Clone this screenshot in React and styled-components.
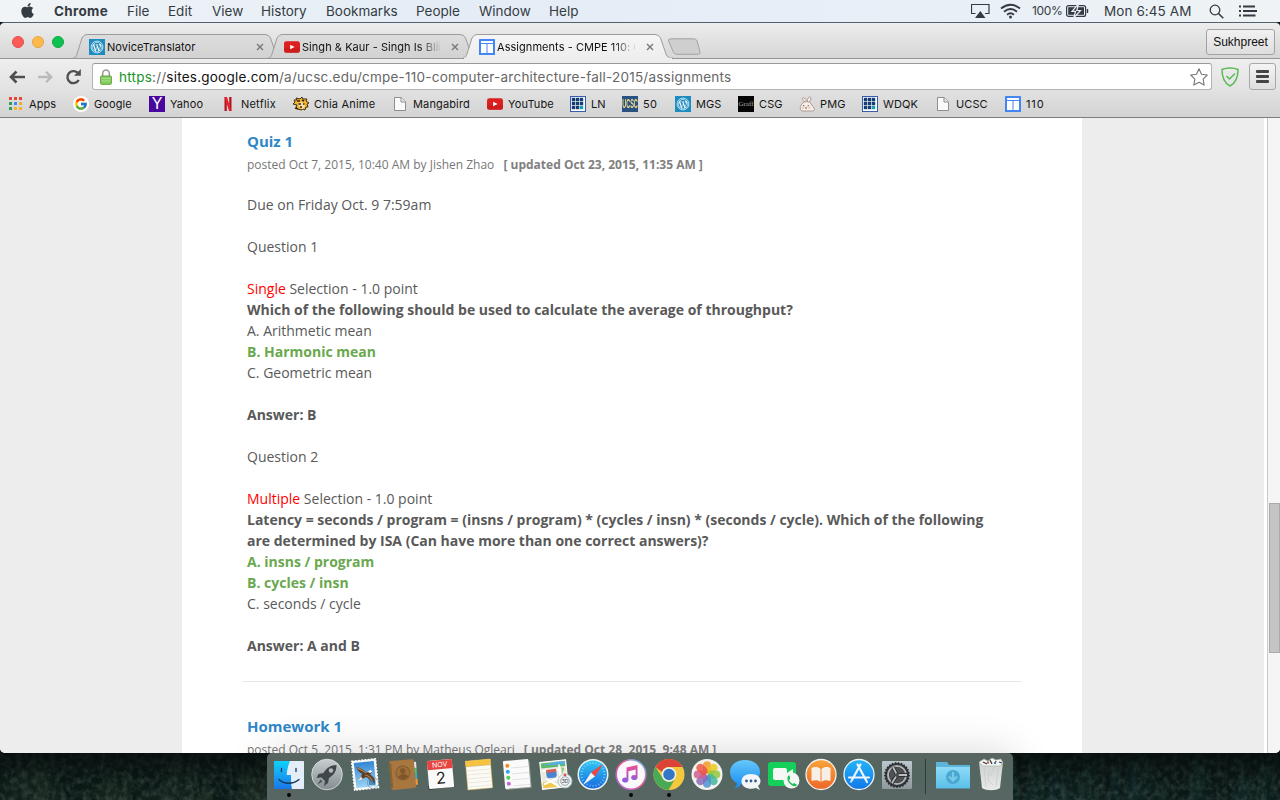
import React from "react";
import styled, { createGlobalStyle, css } from "styled-components";
import { FaApple, FaWordpressSimple } from "react-icons/fa";
import { FcGoogle } from "react-icons/fc";

const GlobalStyle = createGlobalStyle`
  * { box-sizing: border-box; }
  body { margin: 0; overflow: hidden; background: #0c1917; }
`;

const ui = `Inter, "Liberation Sans", sans-serif`;

const Desktop = styled.div`
  position: relative;
  display: flex;
  flex-direction: column;
  width: 1280px;
  height: 800px;
  overflow: hidden;
  background: #0c1917;
  font-family: ${ui};
`;

/* ---------- menu bar ---------- */

const MenuBar = styled.header`
  display: flex;
  align-items: center;
  height: 22px;
  flex: none;
  padding: 0 23px 0 20px;
  background: linear-gradient(90deg, #f0f4f6, #e4edf6 35%, #e7eff7 70%, #eff3f5);
  color: #353b42;
  font-size: 13.5px;
  line-height: 22px;
  white-space: nowrap;
`;

const AppleSlot = styled.span`
  display: flex;
  width: 34px;
  svg { width: 15px; height: 17px; margin-top: -2px; }
`;

const MenuItem = styled.span`
  width: ${(p) => p.$w}px;
  flex: none;
  font-weight: ${(p) => (p.$bold ? 700 : 400)};
  letter-spacing: ${(p) => (p.$bold ? 0.3 : 0)}px;
`;

const MenuStatus = styled.div`
  display: flex;
  align-items: center;
  margin-left: auto;
  svg { display: block; flex: none; }
`;

const WifiIcon = styled.svg`margin-left: 10px;`;
const ListIcon = styled.svg`margin-left: 15px;`;

const BatteryText = styled.span`
  width: 34px;
  margin-left: 11px;
  font-size: 12px;
  letter-spacing: -0.35px;
`;

const Clock = styled.span`
  width: 88px;
  margin: 0 17px 0 15px;
  letter-spacing: 0.08px;
`;

/* ---------- browser window ---------- */

const Window = styled.main`
  display: flex;
  flex-direction: column;
  width: 1280px;
  height: 731px;
  flex: none;
  border-top: 1px solid #52616e;
  border-radius: 5px;
  overflow: hidden;
  background: #e4e4e4;
`;

const TabStrip = styled.div`
  display: flex;
  align-items: flex-start;
  height: 36px;
  flex: none;
  padding: 0 5px 0 12px;
  border-bottom: 1px solid #969696;
  background: linear-gradient(#ededed, #d6d6d6);
`;

const Lights = styled.div`
  display: flex;
  gap: 8px;
  width: 61px;
  padding-top: 13px;
`;

const Light = styled.i`
  width: 12px;
  height: 12px;
  border-radius: 50%;
  background: ${(p) => p.$c};
  border: 1px solid ${(p) => p.$b};
`;

const TabBox = styled.div`
  position: relative;
  z-index: ${(p) => (p.$active ? 3 : 1)};
  display: flex;
  align-items: center;
  width: 210px;
  height: 26px;
  margin: 10px -15px 0 0;
  padding: 2px 19px 0 16px;
  font-size: 11px;
  color: #111;
`;

const TabShape = styled.svg`
  position: absolute;
  inset: 0;
  z-index: -1;
`;

const TabTitle = styled.span`
  width: 138px;
  margin-left: 2px;
  overflow: hidden;
  white-space: nowrap;
  letter-spacing: 0.05px;
  ${(p) =>
    p.$fade &&
    css`
      mask-image: linear-gradient(90deg, #000 84%, transparent 102%);
    `}
`;

const TabClose = styled.svg`
  flex: none;
  margin-left: auto;
`;

const NewTab = styled.svg`
  margin: 15px 0 0 9px;
`;

const ProfileButton = styled.button`
  width: 69px;
  height: 26px;
  margin: 6px 0 0 auto;
  padding: 0;
  border: 1px solid #a2a2a2;
  border-radius: 3px;
  background: linear-gradient(#f1f1f1, #dedede);
  font: 12px "Liberation Sans", Arial, sans-serif;
  color: #111;
`;

const Toolbar = styled.div`
  display: flex;
  align-items: center;
  height: 32px;
  flex: none;
  padding: 3px 4px 0 8px;
  background: linear-gradient(#eeeeee, #e2e2e2);
`;

const NavIcon = styled.svg`
  flex: none;
  margin-right: ${(p) => p.$mr}px;
`;

const Omnibox = styled.div`
  display: flex;
  align-items: center;
  width: 1120px;
  height: 27px;
  padding: 0 3px 0 7px;
  border: 1px solid #b3b3b3;
  border-top-color: #999;
  border-radius: 3px;
  background: #fff;
`;

const Url = styled.span`
  margin-left: 7px;
  font-size: 13.5px;
  color: #666;
  letter-spacing: 0.23px;
  white-space: nowrap;
`;
const Scheme = styled.span`color: #149527;`;
const Host = styled.span`color: #111;`;

const StarIcon = styled.svg`margin-left: auto;`;
const ShieldIcon = styled.svg`margin-left: 9px;`;

const MenuButton = styled.button`
  display: flex;
  flex-direction: column;
  gap: 2px;
  align-items: center;
  justify-content: center;
  width: 27px;
  height: 27px;
  padding: 0;
  margin-left: auto;
  border: 1px solid #a8a8a8;
  border-radius: 3px;
  background: linear-gradient(#f4f4f4, #dedede);
`;
const MenuLine = styled.i`
  width: 13px;
  height: 3px;
  border-radius: 1px;
  background: #444;
`;

const BookmarkBar = styled.nav`
  display: flex;
  align-items: center;
  height: 27px;
  flex: none;
  padding-left: 8px;
  border-bottom: 1px solid #7d7d7d;
  background: linear-gradient(#e1e1e1, #d3d3d3);
  font-size: 11px;
  color: #151515;
`;

const Bookmark = styled.a`
  display: flex;
  align-items: center;
  gap: 5px;
  flex: none;
  width: ${(p) => p.$w}px;
  letter-spacing: ${(p) => p.$ls}px;
  white-space: nowrap;
`;

const Tile = styled.i`
  display: flex;
  align-items: center;
  justify-content: center;
  flex: none;
  width: 16px;
  height: 16px;
  overflow: hidden;
  background: ${(p) => p.$bg};
  color: ${(p) => p.$fg || "#fff"};
  border-radius: ${(p) => p.$r || 0};
  font: ${(p) => p.$font || `700 14px ${ui}`};
  letter-spacing: 0;
`;

const Squeeze = styled.span`
  transform: scaleX(${(p) => p.$x});
`;

/* ---------- page ---------- */

const Viewport = styled.div`
  display: flex;
  height: 635px;
  background: #ededed;
  padding-left: 182px;
`;

const Sheet = styled.article`
  width: 900px;
  height: 635px;
  padding: 13px 60px 0;
  overflow: hidden;
  background: #fff;
  font-family: "Open Sans", "Noto Sans", sans-serif;
  color: #595959;
`;

const Post = styled.section`
  padding: 0 5px 25px;
  margin-bottom: 34px;
  border-bottom: 1px solid #e8e8e8;
`;

const PostTitle = styled.h2`
  margin: 0;
  font-size: 15px;
  line-height: 20px;
  font-weight: 700;
  color: #2f87c8;
`;

const Meta = styled.div`
  margin-top: 4px;
  font-size: 12px;
  line-height: 20px;
  color: #777;
  b { margin-left: 6px; color: #808080; }
`;

const Body = styled.div`
  padding-top: 19px;
  font-size: 14px;
  line-height: 21px;
`;

const Line = styled.div`
  white-space: nowrap;
  margin-top: ${(p) => (p.$gap ? 21 : 0)}px;
  font-weight: ${(p) => (p.$bold || p.$correct ? 700 : 400)};
  color: ${(p) => (p.$correct ? "#6aa84f" : "inherit")};
`;

const Red = styled.span`color: #f00;`;

const ScrollTrack = styled.div`
  width: 16px;
  margin-left: auto;
  padding: 385px 1px 0 1px;
  border-left: 3px solid #fff;
  background: linear-gradient(90deg, #c9c9c9 1px, #f5f5f5 1px);
`;
const ScrollThumb = styled.div`
  width: 11px;
  height: 150px;
  margin-left: 1px;
  border: 1px solid #aaa;
  background: #c4c4c4;
`;

/* ---------- dock ---------- */

const Forest = styled.svg`
  position: absolute;
  left: 0;
  bottom: 0;
`;

const Dock = styled.footer`
  position: absolute;
  left: 267px;
  bottom: 0;
  display: flex;
  width: 746px;
  height: 47px;
  padding-left: 3px;
  border-radius: 5px 5px 0 0;
  background: linear-gradient(#59645f, #526760 45%, #596563);
  box-shadow: 0 0 40px rgba(0, 0, 0, 0.16);
`;

const DockItem = styled.div`
  display: flex;
  flex-direction: column;
  align-items: center;
  width: 38px;
  padding-top: 4px;
  svg { display: block; overflow: visible; }
`;

const RunningDot = styled.i`
  width: 4px;
  height: 4px;
  margin-top: 2px;
  border-radius: 50%;
  background: #050505;
`;

const DockDivider = styled.i`
  width: 1px;
  height: 35px;
  margin: 6px 8px 0 9px;
  background: #303b38;
`;

/* ---------- small icons ---------- */

const Wordpress = () => (
  <Tile $bg="#1e8cbe" $fg="#fff">
    <svg width="14" height="14" viewBox="0 0 14 14">
      <circle cx="7" cy="7" r="5.9" fill="none" stroke="#d4eaf4" strokeWidth=".9" />
      <g transform="translate(2 2)"><FaWordpressSimple size={10} /></g>
    </svg>
  </Tile>
);

const YouTube = () => (
  <svg width="16" height="16" viewBox="0 0 16 16">
    <rect y="2.3" width="16" height="11.4" rx="2.3" fill="#dc2020" />
    <path d="M0 9h16v2.5a2.3 2.3 0 0 1-2.3 2.2H2.3A2.3 2.3 0 0 1 0 11.500z" fill="#bf1515" opacity=".5" />
    <path d="M6.200 5.700v4.600L10.600 8z" fill="#fff" />
  </svg>
);

const SitesIcon = () => (
  <svg width="16" height="16" viewBox="0 0 16 16">
    <rect width="16" height="16" rx=".6" fill="#4285f4" />
    <path d="M2 2h12v2H2zM2 5h5.500v9H2zM8.500 5H14v9H8.500z" fill="#fff" />
  </svg>
);

const PageIcon = () => (
  <svg width="16" height="16" viewBox="0 0 16 16">
    <path d="M2.500 1.500h6.700l4.300 4.300v8.700h-11z" fill="#fafafa" stroke="#8f8f8f" />
    <path d="M9 1.500v4.500h4.500" fill="#e9e9e9" stroke="#8f8f8f" />
  </svg>
);

const GridIcon = () => (
  <svg width="16" height="16" viewBox="0 0 16 16">
    <rect width="16" height="16" fill="#365cab" />
    <rect x="1" y="1" width="14" height="14" fill="#fff" />
    {[0, 1, 2].map((r) =>
      [0, 1, 2].map((c) => (
        <rect key={`${r}${c}`} x={2 + c * 4} y={2 + r * 4} width="3" height="3" fill={r === 2 && c === 2 ? "#17a2a8" : "#173d73"} stroke={r === 2 && c === 2 ? "#17a2a8" : "#173d73"} strokeWidth=".4" />
      ))
    )}
  </svg>
);

const appColors = ["#e94335", "#e94335", "#e94335", "#2f9e57", "#4285f4", "#f7a928", "#2f9e57", "#f7b328", "#f7b328"];
const AppsIcon = () => (
  <svg width="16" height="16" viewBox="0 0 16 16">
    {appColors.map((c, i) => (
      <rect key={i} x={1 + (i % 3) * 5} y={1 + Math.floor(i / 3) * 5} width="3" height="3" fill={c} />
    ))}
  </svg>
);

const NetflixIcon = () => (
  <svg width="16" height="16" viewBox="0 0 16 16">
    <path d="M4.500 1h2.300v14H4.500zM9.200 1h2.300v14H9.200z" fill="#b9131b" />
    <path d="M4.500 1h2.400l4.600 14H9.100z" fill="#e8222b" />
  </svg>
);

const ChiaIcon = () => (
  <svg width="16" height="16" viewBox="0 0 16 16">
    <path d="M1 4l3 0-1-2 4 1 2-2 1 2 4 0-1 2 3 2-2 1 1 3-2 0-1 3-2-1-2 1-3-1-2-2 1-2-4-1 2-2z" fill="#f5b52b" stroke="#41300d" strokeWidth="1" />
    <path d="M5 8l2-2 4 1 1 3-2 3-3-1z" fill="#f8dfae" />
    <path d="M5.500 8h2.500M10 8h1.500M7 11h2M4 5h3M9 4l2 1M2 12l3 1" stroke="#30240e" strokeWidth="1.400" />
  </svg>
);

const BunnyIcon = () => (
  <svg width="16" height="16" viewBox="0 0 16 16">
    <g fill="#f7f1ec" stroke="#a28577" strokeWidth=".8">
      <path d="M6 6C3 4 2.500 1.500 4.500 1.800S7 4 7.500 5.500M8.500 5.500c0-3 1-5 2.500-4.500s1 3-.5 5" />
      <path d="M1.500 13c-1-2 .5-3 .8-4 1-4 8.700-4.500 9.700-1l3 4c1.500 3-1.500 3-3.500 3H4c-1.500 0-2.500-.8-2.500-2z" />
    </g>
    <path d="M4 9.500l1.500.5M8.500 10l1.500-.5M6 12h2" stroke="#715247" />
    <circle cx="3.800" cy="11.700" r="1" fill="#edb7a5" /><circle cx="10.500" cy="11.700" r="1" fill="#edb7a5" />
  </svg>
);

const bookmarks = [
  ["Apps", 65, <AppsIcon />, 0.1],
  ["Google", 76, <Tile $bg="#fff" $r="50%"><FcGoogle size={14} /></Tile>, 0.08],
  ["Yahoo", 71, <Tile $bg="#4a079d" $font={`400 16px "Liberation Sans", sans-serif`}>Y</Tile>, 0.12],
  ["Netflix", 73, <NetflixIcon />, 0.2],
  ["Chia Anime", 99, <ChiaIcon />, 0.2],
  ["Mangabird", 95, <PageIcon />, 0.14],
  ["YouTube", 83, <YouTube />, 0.1],
  ["LN", 52, <GridIcon />, 0.1],
  ["50", 53, <Tile $bg="#295181" $fg="#f4df86" $font={`700 12px "Liberation Sans", sans-serif`}><Squeeze $x={0.46}>UCSC</Squeeze></Tile>, 0.2],
  ["MGS", 63, <Wordpress />, 0],
  ["CSG", 61, <Tile $bg="#050505" $fg="#aaa" $font={`400 7px "Liberation Serif", serif`}>Graff</Tile>, 0.1],
  ["PMG", 63, <BunnyIcon />, 0.1],
  ["WDQK", 73, <GridIcon />, 0.1],
  ["UCSC", 70, <PageIcon />, 0.1],
  ["110", 60, <SitesIcon />, 0.9],
];

/* ---------- tabs ---------- */

function Tab({ icon, title, active, fade }) {
  const id = active ? "tabOn" : "tabOff";
  return (
    <TabBox $active={active}>
      <TabShape width="210" height="26" viewBox="0 0 210 26">
        <defs>
          <linearGradient id={id} x1="0" y1="0" x2="0" y2="1">
            <stop offset="0" stopColor={active ? "#f5f5f5" : "#dddddd"} />
            <stop offset="1" stopColor={active ? "#eeeeee" : "#d2d2d2"} />
          </linearGradient>
        </defs>
        <path
          d="M0 25C3 25 3 23 4 21L9 5Q11 1.500 14 1.500H192Q196 1.500 197.500 5L203 21C204 24 206 25 210 25"
          fill={`url(#${id})`}
          stroke="#9c9c9c"
        />
        {active && <path d="M1 25.500H209" stroke="#eeeeee" strokeWidth="1.400" />}
      </TabShape>
      {icon}
      <TabTitle $fade={fade}>{title}</TabTitle>
      <TabClose width="8" height="8" viewBox="0 0 8 8">
        <path d="M1 1l6 6M7 1L1 7" stroke="#777" strokeWidth="1.400" />
      </TabClose>
    </TabBox>
  );
}

/* ---------- dock icons ---------- */

const Svg = ({ children }) => (
  <svg width="34" height="34" viewBox="0 0 34 34">{children}</svg>
);
const Gradient = ({ id, a, b }) => (
  <linearGradient id={id} x1="0" y1="0" x2="0" y2="1">
    <stop offset="0" stopColor={a} />
    <stop offset="1" stopColor={b} />
  </linearGradient>
);

const Finder = () => (
  <Svg>
    <Gradient id="finderBlue" a="#10d1fb" b="#1976ea" />
    <rect x="2" y="4" width="30" height="28" rx=".8" fill="#e4eef8" />
    <path d="M2 4h16c-2 5-3 9-3.300 14H19c0 5 0 10 1 14H2z" fill="url(#finderBlue)" />
    <path d="M9.500 11.500v3M24 11.500v3M7 22.500c5 5 14 5 20 0" fill="none" stroke="#173450" strokeWidth="1.300" strokeLinecap="round" />
  </Svg>
);

const Launchpad = () => (
  <Svg>
    <Gradient id="lp" a="#c7cdd0" b="#848c90" />
    <circle cx="17" cy="17.500" r="15.300" fill="url(#lp)" stroke="#dfe4e5" strokeWidth=".8" />
    <path d="M26.500 8c-6 0-10 3-13 8l-5 1-2 4 5-.5 3.500 3.500-1 5 4-3 1-5c5-3 7.500-7 7.500-13z" fill="#40474b" />
    <circle cx="21" cy="13.500" r="2.200" fill="#b1b7ba" />
    <path d="M10.500 22.500l-3 5 5-3" fill="#4d5356" />
  </Svg>
);

const Mail = () => (
  <Svg>
    <Gradient id="mail" a="#3386d2" b="#9bd3f6" />
    <g transform="rotate(-6 17 17)">
      <rect x="5" y="3" width="24" height="29" fill="#f5f7f7" stroke="#fff" strokeWidth="1.500" strokeDasharray="2 1.200" />
      <rect x="7" y="5" width="20" height="25" fill="url(#mail)" />
      <path d="M9 9c1 4 3 6 5 7l-1 3-3 3 5-1 3-1 3 3 5 5c1-5-1-8-4-10l2-2-2-1-3 1c-2-3-6-6-10-7z" fill="#5c4028" />
      <path d="M10 10c2 2 5 3 8 6M17 18c3 1 6 4 7 8" fill="none" stroke="#b98549" strokeWidth="1.200" />
      <path d="M20 15l3-1.500 1.500 2-2.500 1z" fill="#fff" />
      <path d="M13 19l-4 4 5-1z" fill="#efe8d6" />
    </g>
    <circle cx="25" cy="26" r="5.500" fill="none" stroke="#4d6878" opacity=".45" />
    <path d="M21 23h6v5h-6z" fill="#28608a" opacity=".6" />
  </Svg>
);

const Contacts = () => (
  <Svg>
    <g transform="rotate(-5 17 17)">
      <path d="M27 6h4v6h-4z" fill="#e7e7e7" /><path d="M27 12h4v6h-4z" fill="#4ac17c" /><path d="M27 18h4v5h-4z" fill="#3ba9cb" /><path d="M27 23h4v6h-4z" fill="#f19a31" />
      <rect x="4" y="3" width="25" height="29" rx="2" fill="#a87740" />
      <path d="M4 5h2v25H4z" fill="#86602f" />
      <circle cx="17" cy="16" r="7" fill="#a07039" stroke="#855c30" />
      <circle cx="17" cy="14" r="2.700" fill="#7f562a" /><path d="M12 20c1-4 9-4 10 0-3 3-7 3-10 0z" fill="#7f562a" />
    </g>
  </Svg>
);

const Calendar = () => (
  <Svg>
    <path d="M4 29l26-2 2 2-27 4z" fill="#353b3b" />
    <path d="M29 5l3 24-3 1z" fill="#596062" />
    <g transform="rotate(-5 17 17)">
      <rect x="4" y="3" width="25" height="28" rx="1" fill="#fafafa" />
      <path d="M4 3h25v9H4z" fill="#e5443f" />
      <text x="16.500" y="10" textAnchor="middle" fontFamily="Inter, sans-serif" fontSize="7" fill="#fff">NOV</text>
      <text x="16.500" y="26.500" textAnchor="middle" fontFamily="Inter, sans-serif" fontSize="16" fill="#252525">2</text>
    </g>
  </Svg>
);

const Notes = () => (
  <Svg>
    <g transform="rotate(-5 17 17)">
      <rect x="4.500" y="3" width="25" height="29" fill="#fbfaf4" stroke="#d2aa4a" strokeWidth=".5" />
      <path d="M4.500 3h25v5.500h-25z" fill="#f5c33f" /><path d="M4.500 8.700h25" stroke="#c4983c" strokeWidth=".5" />
      <path d="M5 13h24M5 17h24M5 21h24M5 25h24M5 29h24" stroke="#e3e0d8" strokeWidth=".7" />
    </g>
  </Svg>
);

const Reminders = () => (
  <Svg>
    <g transform="rotate(-5 17 17)">
      <path d="M5 31.500h25V5" fill="none" stroke="#999" strokeWidth="1" />
      <rect x="4" y="3" width="25.500" height="28" rx="1" fill="#fafafa" />
      {["#f18b27", "#2da9ee", "#4fd160", "#c16bda"].map((c, i) => (
        <g key={c}><circle cx="8" cy={8 + i * 6} r="2" fill={c} /><path d={`M12 ${10.500 + i * 6}h17`} stroke="#d9d9d9" strokeWidth=".7" /></g>
      ))}
    </g>
  </Svg>
);

const Maps = () => (
  <Svg>
    <g transform="rotate(-6 17 17)">
      <rect x="3" y="4" width="26" height="27" fill="#ece9df" stroke="#fff" />
      <path d="M4 5h24v5H4z" fill="#5db86a" /><path d="M4 6h12l1-1h11v3H16z" fill="#58afe4" />
      <path d="M4 24l9-1 6 7H4z" fill="#f1c84c" /><path d="M5 13h17M22 8v12M8 21l12 9M5 26l20-6" stroke="#fff" strokeWidth="2" />
      <rect x="8" y="12" width="11" height="9" rx="3" fill="#4a83ce" stroke="#fff" strokeWidth=".6" />
      <path d="M8.500 12h10v3h-10z" fill="#d66156" />
      <path d="M24 11l3 1-3 6z" fill="#8bc776" />
    </g>
    <circle cx="27" cy="24" r="7" fill="#eff3f4" stroke="#a9b7bd" strokeWidth=".8" />
    <circle cx="27" cy="24" r="4.300" fill="none" stroke="#7f929a" strokeWidth=".8" />
    <text x="27" y="26" textAnchor="middle" fontFamily="Inter, sans-serif" fontSize="5" fill="#333">3D</text>
    <path d="M27 16l-1.500 3h3z" fill="#e93b36" />
  </Svg>
);

const Safari = () => (
  <Svg>
    <Gradient id="saf" a="#30c8f4" b="#1869df" />
    <circle cx="17" cy="17.500" r="15.500" fill="#edf2f4" /><circle cx="17" cy="17.500" r="14" fill="url(#saf)" />
    {Array.from({ length: 24 }, (_, i) => <path key={i} d="M17 5v2" stroke="#b9ecff" strokeWidth=".6" transform={`rotate(${i * 15} 17 17.500)`} />)}
    <path d="M27 7L15 15.500l4 4z" fill="#f3433d" /><path d="M7 28l8-12.500 4 4z" fill="#f1f2f3" />
  </Svg>
);

const Itunes = () => (
  <Svg>
    <linearGradient id="ituneRing" x1="0" y1="1" x2="1" y2="0"><stop stopColor="#a26cf1" /><stop offset=".5" stopColor="#f35290" /><stop offset="1" stopColor="#50c9f5" /></linearGradient>
    <Gradient id="ituneNote" a="#f34f8d" b="#875de4" />
    <circle cx="17" cy="17.500" r="14.800" fill="#faf8fb" stroke="url(#ituneRing)" strokeWidth="1.600" />
    <path d="M12.500 10.500l11-2.500v12.500a3.200 2.500 0 1 1-1.800-2.200V12.500l-7.300 1.700V23a3.200 2.500 0 1 1-1.900-2.200z" fill="url(#ituneNote)" />
  </Svg>
);

const ChromeIcon = () => (
  <Svg>
    <circle cx="17" cy="17.500" r="15.500" fill="#f4c83d" />
    <path d="M3.500 10A15.500 15.500 0 0 1 30.500 10H17a7.500 7.500 0 0 0-7 5z" fill="#dc4337" />
    <path d="M3.500 10A15.500 15.500 0 0 0 16.500 33l7-12a7.500 7.500 0 0 1-13 0z" fill="#48aa57" />
    <circle cx="17" cy="17.500" r="7.300" fill="#f2f2ef" /><circle cx="17" cy="17.500" r="5.800" fill="#3478c5" />
  </Svg>
);

const petalColors = ["#f59a28", "#e8c91f", "#92c83f", "#43b69b", "#4b91d3", "#8c68b9", "#cf5e93", "#ec554b"];
const Photos = () => (
  <Svg>
    <circle cx="17" cy="17.500" r="15.500" fill="#f3f2ec" />
    {petalColors.map((c, i) => <rect key={c} x="13" y="4.200" width="8" height="12.500" rx="4" fill={c} opacity=".84" transform={`rotate(${i * 45} 17 17.500)`} />)}
  </Svg>
);

const Messages = () => (
  <Svg>
    <Gradient id="msg" a="#65c8fb" b="#188bef" />
    <path d="M17 3c8.500 0 15 5 15 12s-6 12.500-15 12.500L13 27c-1 3-4 4-7 4 2-1 3-3 3-5-4-2-7-6-7-11C2 8 8.500 3 17 3z" fill="url(#msg)" />
    <path d="M23 17c6 0 9.500 3 9.500 7 0 2-1 4-2.500 5l2 4-4-2c-6 2-14.500 0-14.500-6.500C13.500 20 17 17 23 17z" fill="#f3f6f8" />
    <circle cx="18.500" cy="24" r="1.400" fill="#315e8c" /><circle cx="23" cy="24" r="1.400" fill="#315e8c" /><circle cx="27.500" cy="24" r="1.400" fill="#315e8c" />
  </Svg>
);

const Handset = ({ t }) => (
  <path transform={t} d="M2 1c1-1 2 0 2 1L4 4 3 5c1 2 2 3 4 4l1-1 2 1c1 0 1 1 0 2C7 13-1 6 2 1z" fill="#22bf57" />
);
const FaceTime = () => (
  <Svg>
    <rect x="2" y="5" width="28" height="24" rx="3" fill="#15cf5b" />
    <rect x="7" y="11" width="14" height="12" rx="2" fill="#f5f8f6" /><path d="M21 16l6-4v10l-6-4z" fill="#f5f8f6" />
    <circle cx="25.500" cy="23.500" r="8" fill="#f3f7f4" /><Handset t="translate(20 18)" />
  </Svg>
);

const IBooks = () => (
  <Svg>
    <Gradient id="book" a="#f8a43b" b="#ee6628" />
    <circle cx="17" cy="17.500" r="15" fill="url(#book)" stroke="#f3f0ec" strokeWidth="1.300" />
    <path d="M16.500 12c-3-3-7-2-9-1v13c4-1 7-1 9 1zM17.500 12c3-3 7-2 9-1v13c-4-1-7-1-9 1z" fill="#f6efe6" />
  </Svg>
);

const AppStore = () => (
  <Svg>
    <Gradient id="store" a="#22b6f7" b="#1177e9" />
    <circle cx="17" cy="17.500" r="15" fill="url(#store)" stroke="#e8f1f6" strokeWidth="1.300" />
    <path d="M18.500 7.500L10 23M15.500 7.500L25 25M7 20.500h20" fill="none" stroke="#eef6fc" strokeWidth="2.200" strokeLinecap="round" />
    <path d="M10 23l-1.500 2.500" stroke="#c9dff3" strokeWidth="2" />
  </Svg>
);

const Preferences = () => (
  <Svg>
    <Gradient id="pref" a="#bbc7ce" b="#8f989d" />
    <rect x="2" y="4" width="30" height="28" rx="1" fill="url(#pref)" />
    <circle cx="17" cy="18" r="12" fill="#34373a" stroke="#292d2f" strokeWidth="1.800" strokeDasharray="1.500 1.500" />
    <circle cx="17" cy="18" r="9" fill="none" stroke="#aeb2b4" strokeWidth="2" />
    <circle cx="17" cy="18" r="7.500" fill="#4e5254" />
    <path d="M17 18l-4-8M17 18h10M17 18l-5 8" stroke="#222628" strokeWidth="3.500" />
    <path d="M17 18l-4-8M17 18h10M17 18l-5 8" stroke="#b9bdbf" strokeWidth="1.800" /><circle cx="17" cy="18" r="2" fill="#4a4e50" />
  </Svg>
);

const Downloads = () => (
  <Svg>
    <Gradient id="folder" a="#8edaf8" b="#5abfe7" />
    <path d="M0 5h11l2 3h21v23H0z" fill="#5cb5d9" /><path d="M0 10h34v21.500H0z" fill="url(#folder)" />
    <circle cx="17" cy="20" r="7" fill="#49a7d0" /><path d="M17 15v7M13 19.500l4 4 4-4" fill="none" stroke="#79cbe9" strokeWidth="2.200" />
  </Svg>
);

const Trash = () => (
  <Svg>
    <Gradient id="bin" a="#d6dad8" b="#f5f5f3" />
    <path d="M5 5h24l-3 26c-4 3-14 3-18 0z" fill="url(#bin)" opacity=".92" />
    <path d="M5 5l5-3 4 2 4-3 4 2 5-1 2 4-3 3H9z" fill="#f4f4f0" stroke="#a9aeac" strokeWidth=".6" />
    <path d="M9 5l4 2M16 3l2 4M22 4l-1 3M25 5l3 1" stroke="#32424b" strokeWidth="1.300" />
    <path d="M13 5l2 1" stroke="#c76245" strokeWidth="2" /><path d="M20 6h2" stroke="#4883b3" strokeWidth="2" />
    <path d="M10 11l2 19M24 11l-2 19M15 14l-1 9 5 5M20 10l-3 9" fill="none" stroke="#c3c8c4" strokeWidth=".6" />
  </Svg>
);

const dockApps = [
  [Finder, true], [Launchpad], [Mail], [Contacts], [Calendar], [Notes], [Reminders], [Maps], [Safari],
  [Itunes, true], [ChromeIcon, true], [Photos], [Messages], [FaceTime], [IBooks], [AppStore], [Preferences],
];

const rand = (n) => {
  const v = Math.sin(n * 127.100) * 43758.5453;
  return v - Math.floor(v);
};
const leftFills = ["#111f1b", "#15231d", "#1b2a22", "#0e1b18", "#202f26"];
const rightFills = ["#0b1f1e", "#0a1a19", "#10282a", "#0d2220", "#132b28"];
const trees = Array.from({ length: 230 }, (_, i) => {
  const x = rand(i + 1) * 1280;
  const y = (i / 230) * 44 - 8 + rand(i + 400) * 6;
  const w = 7 + rand(i + 800) * 9;
  const fills = x > 900 ? rightFills : leftFills;
  return {
    d: `M${x} ${y}l${w * 0.4} 9h-2l${w * 0.4} 9h-2l${w * 0.5} 34h${-w * 2}l${w * 0.5}-34h-2l${w * 0.4}-9h-2z`,
    c: fills[Math.floor(rand(i + 1200) * 5)],
  };
});

const menus = [
  ["Chrome", 73, true], ["File", 41], ["Edit", 44], ["View", 49], ["History", 65],
  ["Bookmarks", 90], ["People", 63], ["Window", 70], ["Help", 40],
];

export default function App() {
  return (
    <Desktop>
      <GlobalStyle />
      <MenuBar>
        <AppleSlot><FaApple /></AppleSlot>
        {menus.map(([t, w, b]) => <MenuItem key={t} $w={w} $bold={b}>{t}</MenuItem>)}
        <MenuStatus>
          <svg width="19" height="16" viewBox="0 0 19 16">
            <path d="M4.500 10.500h-4v-9h17.500v9h-4" fill="none" stroke="#353b42" strokeWidth="1.200" />
            <path d="M9.300 8L14.500 15H4z" fill="#353b42" />
          </svg>
          <WifiIcon width="21" height="16" viewBox="0 0 21 16">
            <g fill="none" stroke="#353b42" strokeWidth="1.900">
              <path d="M1 5.500Q10.500-2 20 5.500M4 8.700q6.500-5.200 13 0M7 11.700q3.500-2.700 7 0" />
            </g>
            <circle cx="10.500" cy="13.900" r="1.500" fill="#353b42" />
          </WifiIcon>
          <BatteryText>100%</BatteryText>
          <svg width="23" height="14" viewBox="0 0 23 14">
            <rect x=".6" y="1.600" width="19" height="10.800" rx="2" fill="none" stroke="#353b42" strokeWidth="1.200" />
            <rect x="2.200" y="3.200" width="15.800" height="7.600" fill="#353b42" />
            <path d="M12.500 0L6 7.300h3.600L7.700 14l6.800-7.500h-3.700z" fill="#353b42" stroke="#e9f0f5" strokeWidth="1.200" />
            <path d="M21.500 5v4" stroke="#353b42" strokeWidth="1.400" />
          </svg>
          <Clock>Mon 6:45 AM</Clock>
          <svg width="15" height="15" viewBox="0 0 15 15">
            <circle cx="6" cy="6" r="4.800" fill="none" stroke="#353b42" strokeWidth="1.300" />
            <path d="M9.500 9.500l4.800 4.800" stroke="#353b42" strokeWidth="1.600" />
          </svg>
          <ListIcon width="18" height="12" viewBox="0 0 18 12">
            <path d="M0 1.500h2M0 6h2M0 10.500h2M4 1.500h12M4 6h14M4 10.500h12.500" stroke="#353b42" strokeWidth="1.900" />
          </ListIcon>
        </MenuStatus>
      </MenuBar>

      <Window>
        <TabStrip>
          <Lights>
            <Light $c="#fc5b57" $b="#e2504c" /><Light $c="#fdb94c" $b="#e5a53e" /><Light $c="#0fc250" $b="#0baa45" />
          </Lights>
          <Tab icon={<Wordpress />} title="NoviceTranslator" />
          <Tab icon={<YouTube />} title="Singh & Kaur - Singh Is Bliing" fade />
          <Tab icon={<SitesIcon />} title="Assignments - CMPE 110: Com" active fade />
          <NewTab width="34" height="18" viewBox="0 0 34 18">
            <path d="M4 .8h23q2 0 3 2l3 11q.5 2.500-1.500 2.500H10q-3 0-4-3L1.500 3Q1 .8 4 .8z" transform="translate(6 0)" fill="none" stroke="none" />
            <path d="M4 .8h23q2 0 3 2l3 11q.5 2.500-1.500 2.500H10q-3 0-4-3L1.500 3Q1 .8 4 .8z" fill="#cfcfcf" stroke="#a2a2a2" />
          </NewTab>
          <ProfileButton>Sukhpreet</ProfileButton>
        </TabStrip>

        <Toolbar>
          <NavIcon $mr={12} width="18" height="16" viewBox="0 0 18 16">
            <path d="M17 8H3M8.500 2.500L3 8l5.500 5.500" fill="none" stroke="#4f4f4f" strokeWidth="2.600" />
          </NavIcon>
          <NavIcon $mr={11} width="16" height="16" viewBox="0 0 16 16">
            <path d="M0 8h13M8 2.800L13.300 8 8 13.200" fill="none" stroke="#b9b9b9" strokeWidth="2.300" />
          </NavIcon>
          <NavIcon $mr={11} width="16" height="16" viewBox="0 0 16 16">
            <path d="M13.700 11A6 6 0 1 1 12.500 3.700" fill="none" stroke="#4f4f4f" strokeWidth="2.400" />
            <path d="M15.800 0v6.800H9z" fill="#4f4f4f" />
          </NavIcon>
          <Omnibox>
            <svg width="12" height="16" viewBox="0 0 12 16">
              <path d="M2.700 8V4.500a3.300 3.500 0 0 1 6.600 0V8" fill="none" stroke="#999" strokeWidth="1.500" />
              <rect x=".6" y="7" width="10.800" height="8.300" rx=".8" fill="#85cd60" stroke="#63a642" />
              <path d="M1.500 9.500h9M1.500 12h9" stroke="#a6df87" />
            </svg>
            <Url>
              <Scheme>https</Scheme>://<Host>sites.google.com</Host>/a/ucsc.edu/cmpe-110-computer-architecture-fall-2015/assignments
            </Url>
            <StarIcon width="18" height="18" viewBox="0 0 18 18">
              <path d="M9 .8l2.500 5.500 5.800.7-4.200 4.100 1.100 6L9 14.200l-5.200 2.900 1.100-6L.7 7l5.800-.7z" fill="#fff" stroke="#777" strokeWidth="1.100" strokeLinejoin="round" />
            </StarIcon>
          </Omnibox>
          <ShieldIcon width="18" height="20" viewBox="0 0 18 20">
            <path d="M9 1c3 0 6 .6 8 1.500C17 10 15 16 9 19 3 16 1 10 1 2.500 3 1.600 6 1 9 1z" fill="none" stroke="#5cba55" strokeWidth="1.500" />
            <path d="M5.500 9l3 3L14 6.500" fill="none" stroke="#5cba55" strokeWidth="1.500" />
          </ShieldIcon>
          <MenuButton><MenuLine /><MenuLine /><MenuLine /></MenuButton>
        </Toolbar>

        <BookmarkBar>
          {bookmarks.map(([label, w, icon, ls]) => (
            <Bookmark key={label} $w={w} $ls={ls}>{icon}<span>{label}</span></Bookmark>
          ))}
        </BookmarkBar>

        <Viewport>
          <Sheet>
            <Post>
              <PostTitle>Quiz 1</PostTitle>
              <Meta>posted Oct 7, 2015, 10:40 AM by Jishen Zhao <b>[ updated Oct 23, 2015, 11:35 AM ]</b></Meta>
              <Body>
                <Line>Due on Friday Oct. 9 7:59am</Line>
                <Line $gap>Question 1</Line>
                <Line $gap><Red>Single</Red> Selection - 1.0 point</Line>
                <Line $bold>Which of the following should be used to calculate the average of throughput?</Line>
                <Line>A. Arithmetic mean</Line>
                <Line $correct>B. Harmonic mean</Line>
                <Line>C. Geometric mean</Line>
                <Line $gap $bold>Answer: B</Line>
                <Line $gap>Question 2</Line>
                <Line $gap><Red>Multiple</Red> Selection - 1.0 point</Line>
                <Line $bold>
                  Latency = seconds / program = (insns / program) * (cycles / insn) * (seconds / cycle). Which of the following<br />
                  are determined by ISA (Can have more than one correct answers)?
                </Line>
                <Line $correct>A. insns / program</Line>
                <Line $correct>B. cycles / insn</Line>
                <Line>C. seconds / cycle</Line>
                <Line $gap $bold>Answer: A and B</Line>
              </Body>
            </Post>
            <Post>
              <PostTitle>Homework 1</PostTitle>
              <Meta>posted Oct 5, 2015, 1:31 PM by Matheus Ogleari <b>[ updated Oct 28, 2015, 9:48 AM ]</b></Meta>
            </Post>
          </Sheet>
          <ScrollTrack><ScrollThumb /></ScrollTrack>
        </Viewport>
      </Window>

      <Forest width="1280" height="47" viewBox="0 0 1280 47">
        <defs>
          <filter id="grain" x="0" y="0" width="100%" height="100%">
            <feTurbulence type="fractalNoise" baseFrequency=".18 .16" numOctaves="3" seed="4" />
            <feColorMatrix values="0 0 0 0 .22  0 0 0 0 .31  0 0 0 0 .26  1 0 0 0 -.38" />
          </filter>
          <linearGradient id="shade" x1="0" y1="0" x2="0" y2="1">
            <stop offset="0" stopColor="#050c0b" stopOpacity=".75" />
            <stop offset=".6" stopColor="#050c0b" stopOpacity=".15" />
            <stop offset="1" stopColor="#050c0b" stopOpacity="0" />
          </linearGradient>
        </defs>
        <rect width="1280" height="47" fill="#0b1816" />
        {trees.map((t, i) => <path key={i} d={t.d} fill={t.c} opacity=".5" />)}
        <rect width="1280" height="47" filter="url(#grain)" opacity=".6" />
        <rect width="1280" height="47" fill="url(#shade)" />
      </Forest>

      <Dock>
        {dockApps.map(([Icon, running], i) => (
          <DockItem key={i}><Icon />{running && <RunningDot />}</DockItem>
        ))}
        <DockDivider />
        <DockItem><Downloads /></DockItem>
        <DockItem><Trash /></DockItem>
      </Dock>
    </Desktop>
  );
}
